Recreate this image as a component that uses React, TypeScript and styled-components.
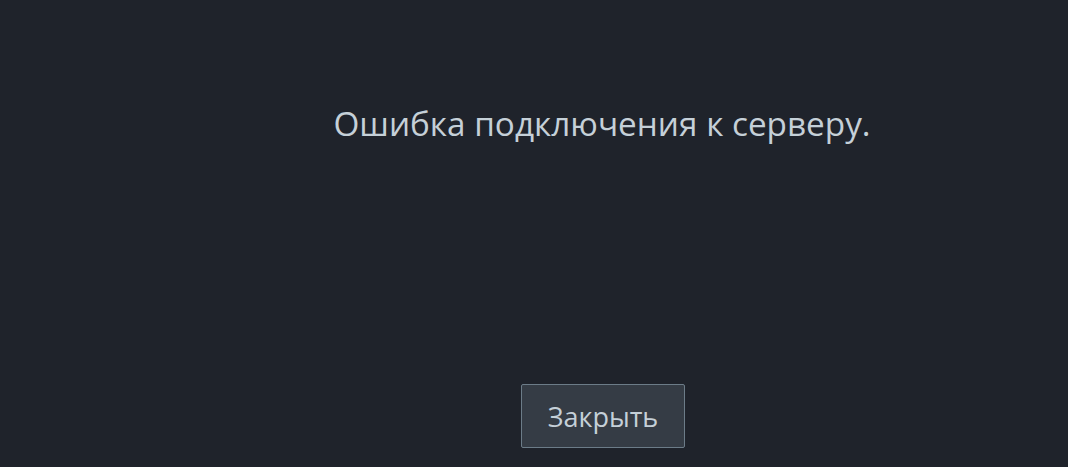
import styled, { createGlobalStyle } from "styled-components";

const GlobalStyle = createGlobalStyle`
  html, body {
    margin: 0;
    padding: 0;
    background: #1f232b;
  }
`;

export const Screen = styled.div`
  width: 1068px;
  height: 467px;
  box-sizing: border-box;
  padding: 0 0 19px 136px;
  display: flex;
  flex-direction: column;
  align-items: center;
  background: #1f232b;
  font-family: "Open Sans", "Noto Sans", sans-serif;
  color: #c5d0d8;
  overflow: hidden;
`;

export const Message = styled.p`
  margin: 100px 0 0;
  font-size: 33.3px;
  line-height: 46px;
  flex: 1;
`;

export const CloseButton = styled.button`
  width: 164px;
  height: 64px;
  margin-left: 2px;
  box-sizing: border-box;
  background: #353c45;
  border: 1px solid #6c7c88;
  border-radius: 2px;
  color: #c5d0d8;
  font-family: inherit;
  font-size: 27px;
  cursor: pointer;
`;

function App() {
  return (
    <>
      <GlobalStyle />
      <Screen>
        <Message>Ошибка подключения к серверу.</Message>
        <CloseButton>Закрыть</CloseButton>
      </Screen>
    </>
  );
}

export default App;
